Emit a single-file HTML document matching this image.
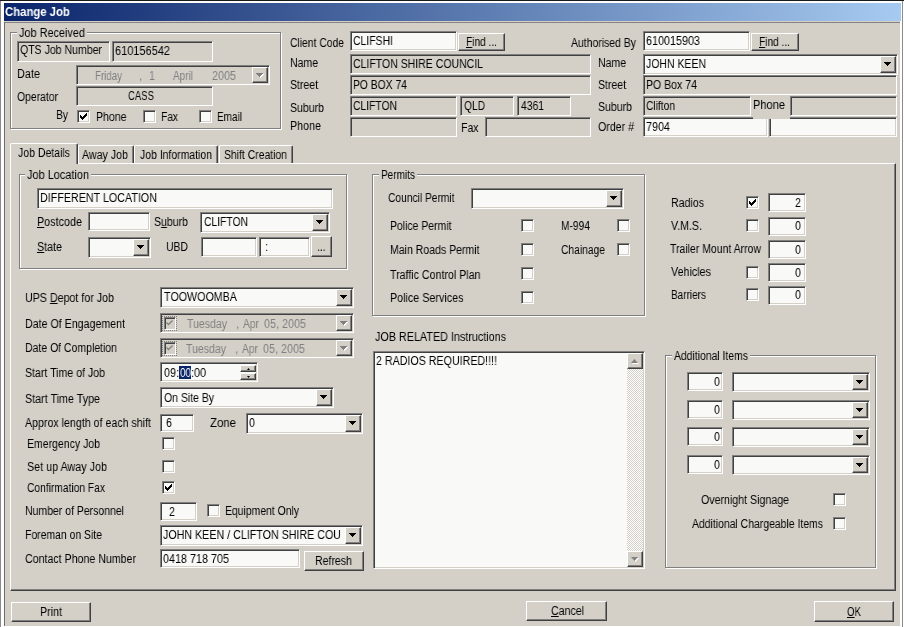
<!DOCTYPE html><html><head><meta charset="utf-8"><title>Change Job</title><style>

html,body{margin:0;padding:0}
body{width:904px;height:627px;overflow:hidden;background:#fdfdfd;position:relative;font-family:"Liberation Sans",sans-serif;font-size:12.5px;color:#000}
div{position:absolute;box-sizing:border-box}
.bg{background:#d4d0c8}
.sk{border:1px solid;border-color:#808080 #fff #fff #808080;box-shadow:inset 1px 1px 0 #404040,inset -1px -1px 0 #d4d0c8;background:#d4d0c8}
.w{background:#f9f9f7}
.bt{border:1px solid;border-color:#fff #404040 #404040 #fff;box-shadow:inset -1px -1px 0 #808080,inset 1px 1px 0 #d4d0c8;background:#d4d0c8}
.gp{border:1px solid #808080;box-shadow:1px 1px 0 #fff,inset 1px 1px 0 #fff}
.tp{border:1px solid;border-color:#fff #404040 #404040 #fff;box-shadow:inset -1px -1px 0 #808080;background:#d4d0c8}
.tab{border:1px solid;border-color:#fff #404040 #d4d0c8 #fff;border-bottom:none;box-shadow:inset -1px 0 0 #808080;background:#d4d0c8;border-radius:2px 2px 0 0}
.tab.act{z-index:2}
.sb{background:#e9e7e3 repeating-conic-gradient(#fff 0 25%,#d4d0c8 0 50%) 0 0/2px 2px}
.dcb{border:1px dotted #808080}
.t{white-space:pre;line-height:14px;height:14px;z-index:3;transform-origin:0 0;will-change:transform}
.t u{text-decoration:underline;text-underline-offset:1px}
#title{left:5px;top:3.75px;font-weight:bold;color:#fff;font-size:12px;line-height:16px;white-space:pre;transform:scaleX(0.945);transform-origin:0 0;will-change:transform}

</style></head><body>
<div class="r" style="left:0px;top:0px;width:904px;height:1px;background:#1a1a1a"></div>
<div class="r" style="left:0px;top:1px;width:1px;height:626px;background:#8a8a8a"></div>
<div class="r" style="left:902px;top:1px;width:1px;height:626px;background:#8c8c8c"></div>
<div class="r" style="left:4px;top:21px;width:896px;height:605px;background:#d4d0c8"></div>
<div class="r" style="left:4px;top:22px;width:896px;height:1px;background:#848484"></div>
<div class="r" style="left:4px;top:22px;width:1px;height:604px;background:#6c6c6c"></div>
<div class="r" style="left:4px;top:3px;width:897px;height:18px;background:linear-gradient(90deg,#0a246a 0%,#a6caf0 100%)"></div>
<div class="gp" style="left:10px;top:32px;width:271px;height:97px;"></div>
<div class="bg" style="left:17px;top:26px;width:70px;height:14px;"></div>
<div class="sk" style="left:17px;top:41px;width:93px;height:21px;"></div>
<div class="sk" style="left:112px;top:41px;width:101px;height:21px;"></div>
<div class="sk" style="left:76px;top:65px;width:194px;height:20px;"></div>
<div class="bt" style="left:252px;top:67px;width:16px;height:16px;"><svg width="7" height="4" viewBox="0 0 7 4" shape-rendering="crispEdges" style="position:absolute;left:4px;top:6px"><path d="M0 0h7v1h-1v1h-1v1h-1v1h-1v-1h-1v-1h-1v-1h-1z" fill="#fff"/></svg><svg width="7" height="4" viewBox="0 0 7 4" shape-rendering="crispEdges" style="position:absolute;left:3px;top:5px"><path d="M0 0h7v1h-1v1h-1v1h-1v1h-1v-1h-1v-1h-1v-1h-1z" fill="#808080"/></svg></div>
<div class="sk" style="left:76px;top:86px;width:137px;height:20px;"></div>
<div class="sk w cb" style="left:77px;top:110px;width:13px;height:13px;"><svg width="7" height="7" viewBox="0 0 7 7" shape-rendering="crispEdges" fill="#000" style="position:absolute;left:2px;top:2px"><rect x="0" y="2" width="1" height="3"/><rect x="1" y="3" width="1" height="3"/><rect x="2" y="4" width="1" height="3"/><rect x="3" y="3" width="1" height="3"/><rect x="4" y="2" width="1" height="3"/><rect x="5" y="1" width="1" height="3"/><rect x="6" y="0" width="1" height="3"/></svg></div>
<div class="sk w cb" style="left:143px;top:110px;width:13px;height:13px;"></div>
<div class="sk w cb" style="left:199px;top:110px;width:13px;height:13px;"></div>
<div class="sk w" style="left:350px;top:31px;width:107px;height:20px;"></div>
<div class="bt" style="left:458px;top:33px;width:47px;height:18px;"></div>
<div class="sk" style="left:350px;top:54px;width:241px;height:20px;"></div>
<div class="sk" style="left:350px;top:75px;width:241px;height:20px;"></div>
<div class="sk" style="left:350px;top:96px;width:107px;height:20px;"></div>
<div class="sk" style="left:460px;top:96px;width:54px;height:20px;"></div>
<div class="sk" style="left:517px;top:96px;width:54px;height:20px;"></div>
<div class="sk" style="left:350px;top:117px;width:107px;height:20px;"></div>
<div class="sk" style="left:485px;top:117px;width:106px;height:20px;"></div>
<div class="sk w" style="left:643px;top:31px;width:107px;height:20px;"></div>
<div class="bt" style="left:751px;top:33px;width:48px;height:18px;"></div>
<div class="sk w" style="left:643px;top:54px;width:255px;height:21px;"></div>
<div class="bt" style="left:880px;top:56px;width:16px;height:17px;"><svg width="7" height="4" viewBox="0 0 7 4" shape-rendering="crispEdges" style="position:absolute;left:3px;top:5px"><path d="M0 0h7v1h-1v1h-1v1h-1v1h-1v-1h-1v-1h-1v-1h-1z" fill="#000"/></svg></div>
<div class="sk" style="left:643px;top:75px;width:254px;height:20px;"></div>
<div class="sk" style="left:643px;top:96px;width:108px;height:20px;"></div>
<div class="sk w" style="left:643px;top:117px;width:125px;height:20px;"></div>
<div class="sk w" style="left:769px;top:117px;width:128px;height:20px;"></div>
<div class="bg" style="left:753px;top:97px;width:37px;height:22px;"></div>
<div class="sk" style="left:790px;top:96px;width:107px;height:20px;"></div>
<div class="tp" style="left:10px;top:163px;width:886px;height:428px;"></div>
<div class="tab" style="left:78px;top:145px;width:56px;height:18px;"></div>
<div class="tab" style="left:134px;top:145px;width:84px;height:18px;"></div>
<div class="tab" style="left:219px;top:145px;width:74px;height:18px;"></div>
<div class="tab act" style="left:10px;top:143px;width:68px;height:21px;"></div>
<div class="gp" style="left:19px;top:174px;width:328px;height:95px;"></div>
<div class="bg" style="left:25px;top:168px;width:66px;height:14px;"></div>
<div class="sk w" style="left:37px;top:188px;width:296px;height:21px;"></div>
<div class="sk w" style="left:88px;top:212px;width:62px;height:19px;"></div>
<div class="sk w" style="left:200px;top:212px;width:130px;height:21px;"></div>
<div class="bt" style="left:312px;top:214px;width:16px;height:17px;"><svg width="7" height="4" viewBox="0 0 7 4" shape-rendering="crispEdges" style="position:absolute;left:3px;top:5px"><path d="M0 0h7v1h-1v1h-1v1h-1v1h-1v-1h-1v-1h-1v-1h-1z" fill="#000"/></svg></div>
<div class="sk w" style="left:88px;top:237px;width:63px;height:21px;"></div>
<div class="bt" style="left:133px;top:239px;width:16px;height:17px;"><svg width="7" height="4" viewBox="0 0 7 4" shape-rendering="crispEdges" style="position:absolute;left:3px;top:5px"><path d="M0 0h7v1h-1v1h-1v1h-1v1h-1v-1h-1v-1h-1v-1h-1z" fill="#000"/></svg></div>
<div class="sk w" style="left:201px;top:237px;width:56px;height:20px;"></div>
<div class="sk w" style="left:259px;top:237px;width:51px;height:20px;"></div>
<div class="bt" style="left:311px;top:236px;width:21px;height:21px;"></div>
<div class="sk w" style="left:160px;top:287px;width:194px;height:21px;"></div>
<div class="bt" style="left:336px;top:289px;width:16px;height:17px;"><svg width="7" height="4" viewBox="0 0 7 4" shape-rendering="crispEdges" style="position:absolute;left:3px;top:5px"><path d="M0 0h7v1h-1v1h-1v1h-1v1h-1v-1h-1v-1h-1v-1h-1z" fill="#000"/></svg></div>
<div class="sk" style="left:160px;top:313px;width:194px;height:20px;"></div>
<div class="bt" style="left:336px;top:315px;width:16px;height:16px;"><svg width="7" height="4" viewBox="0 0 7 4" shape-rendering="crispEdges" style="position:absolute;left:4px;top:6px"><path d="M0 0h7v1h-1v1h-1v1h-1v1h-1v-1h-1v-1h-1v-1h-1z" fill="#fff"/></svg><svg width="7" height="4" viewBox="0 0 7 4" shape-rendering="crispEdges" style="position:absolute;left:3px;top:5px"><path d="M0 0h7v1h-1v1h-1v1h-1v1h-1v-1h-1v-1h-1v-1h-1z" fill="#808080"/></svg></div>
<div class="dcb" style="left:162px;top:316px;width:15px;height:15px;"></div>
<div class="sk" style="left:164px;top:317px;width:12px;height:13px;"><svg width="7" height="6" viewBox="0 0 7 6" style="position:absolute;left:1px;top:2px"><path d="M0.5 2.5L2.5 4.5L6.5 0.5" stroke="#808080" stroke-width="1.3" fill="none"/></svg></div>
<div class="sk" style="left:160px;top:338px;width:194px;height:20px;"></div>
<div class="bt" style="left:336px;top:340px;width:16px;height:16px;"><svg width="7" height="4" viewBox="0 0 7 4" shape-rendering="crispEdges" style="position:absolute;left:4px;top:6px"><path d="M0 0h7v1h-1v1h-1v1h-1v1h-1v-1h-1v-1h-1v-1h-1z" fill="#fff"/></svg><svg width="7" height="4" viewBox="0 0 7 4" shape-rendering="crispEdges" style="position:absolute;left:3px;top:5px"><path d="M0 0h7v1h-1v1h-1v1h-1v1h-1v-1h-1v-1h-1v-1h-1z" fill="#808080"/></svg></div>
<div class="dcb" style="left:162px;top:341px;width:15px;height:15px;"></div>
<div class="sk" style="left:164px;top:342px;width:12px;height:13px;"><svg width="7" height="6" viewBox="0 0 7 6" style="position:absolute;left:1px;top:2px"><path d="M0.5 2.5L2.5 4.5L6.5 0.5" stroke="#808080" stroke-width="1.3" fill="none"/></svg></div>
<div class="sk w" style="left:160px;top:362px;width:98px;height:20px;"></div>
<div class="r" style="left:179px;top:366px;width:12px;height:13px;background:#0a246a"></div>
<div class="bt" style="left:240px;top:365px;width:16px;height:7px;"><svg width="3" height="2" viewBox="0 0 3 2" style="position:absolute;left:6px;top:2px"><path d="M0 2h3L1.5 0z" fill="#000"/></svg></div>
<div class="bt" style="left:240px;top:373px;width:16px;height:7px;"><svg width="3" height="2" viewBox="0 0 3 2" style="position:absolute;left:6px;top:2px"><path d="M0 0h3L1.5 2z" fill="#000"/></svg></div>
<div class="sk w" style="left:160px;top:387px;width:174px;height:21px;"></div>
<div class="bt" style="left:316px;top:389px;width:16px;height:17px;"><svg width="7" height="4" viewBox="0 0 7 4" shape-rendering="crispEdges" style="position:absolute;left:3px;top:5px"><path d="M0 0h7v1h-1v1h-1v1h-1v1h-1v-1h-1v-1h-1v-1h-1z" fill="#000"/></svg></div>
<div class="sk w" style="left:160px;top:414px;width:34px;height:18px;"></div>
<div class="sk w" style="left:246px;top:413px;width:117px;height:21px;"></div>
<div class="bt" style="left:345px;top:415px;width:16px;height:17px;"><svg width="7" height="4" viewBox="0 0 7 4" shape-rendering="crispEdges" style="position:absolute;left:3px;top:5px"><path d="M0 0h7v1h-1v1h-1v1h-1v1h-1v-1h-1v-1h-1v-1h-1z" fill="#000"/></svg></div>
<div class="sk w cb" style="left:162px;top:437px;width:13px;height:13px;"></div>
<div class="sk w cb" style="left:162px;top:460px;width:13px;height:13px;"></div>
<div class="sk w cb" style="left:162px;top:481px;width:13px;height:13px;"><svg width="7" height="7" viewBox="0 0 7 7" shape-rendering="crispEdges" fill="#000" style="position:absolute;left:2px;top:2px"><rect x="0" y="2" width="1" height="3"/><rect x="1" y="3" width="1" height="3"/><rect x="2" y="4" width="1" height="3"/><rect x="3" y="3" width="1" height="3"/><rect x="4" y="2" width="1" height="3"/><rect x="5" y="1" width="1" height="3"/><rect x="6" y="0" width="1" height="3"/></svg></div>
<div class="sk w" style="left:160px;top:502px;width:37px;height:19px;"></div>
<div class="sk w cb" style="left:207px;top:504px;width:13px;height:13px;"></div>
<div class="sk w" style="left:160px;top:525px;width:203px;height:21px;"></div>
<div class="bt" style="left:345px;top:527px;width:16px;height:17px;"><svg width="7" height="4" viewBox="0 0 7 4" shape-rendering="crispEdges" style="position:absolute;left:3px;top:5px"><path d="M0 0h7v1h-1v1h-1v1h-1v1h-1v-1h-1v-1h-1v-1h-1z" fill="#000"/></svg></div>
<div class="sk w" style="left:160px;top:549px;width:140px;height:19px;"></div>
<div class="bt" style="left:304px;top:551px;width:60px;height:20px;"></div>
<div class="gp" style="left:372px;top:174px;width:273px;height:142px;"></div>
<div class="bg" style="left:379px;top:168px;width:38px;height:14px;"></div>
<div class="sk w" style="left:471px;top:188px;width:153px;height:21px;"></div>
<div class="bt" style="left:606px;top:190px;width:16px;height:17px;"><svg width="7" height="4" viewBox="0 0 7 4" shape-rendering="crispEdges" style="position:absolute;left:3px;top:5px"><path d="M0 0h7v1h-1v1h-1v1h-1v1h-1v-1h-1v-1h-1v-1h-1z" fill="#000"/></svg></div>
<div class="sk w cb" style="left:521px;top:219px;width:13px;height:13px;"></div>
<div class="sk w cb" style="left:521px;top:243px;width:13px;height:13px;"></div>
<div class="sk w cb" style="left:521px;top:267px;width:13px;height:13px;"></div>
<div class="sk w cb" style="left:521px;top:291px;width:13px;height:13px;"></div>
<div class="sk w cb" style="left:617px;top:219px;width:13px;height:13px;"></div>
<div class="sk w cb" style="left:617px;top:243px;width:13px;height:13px;"></div>
<div class="sk w" style="left:373px;top:351px;width:272px;height:218px;"></div>
<div class="sb" style="left:627px;top:353px;width:16px;height:214px;"></div>
<div class="bt" style="left:627px;top:353px;width:16px;height:16px;"><svg width="7" height="4" viewBox="0 0 7 4" style="position:absolute;left:4px;top:6px"><path d="M0 4h7L3.5 0z" fill="#fff"/></svg><svg width="7" height="4" viewBox="0 0 7 4" style="position:absolute;left:3px;top:5px"><path d="M0 4h7L3.5 0z" fill="#808080"/></svg></div>
<div class="bt" style="left:627px;top:551px;width:16px;height:16px;"><svg width="7" height="4" viewBox="0 0 7 4" style="position:absolute;left:4px;top:6px"><path d="M0 0h7L3.5 4z" fill="#fff"/></svg><svg width="7" height="4" viewBox="0 0 7 4" style="position:absolute;left:3px;top:5px"><path d="M0 0h7L3.5 4z" fill="#808080"/></svg></div>
<div class="sk w cb" style="left:746px;top:196px;width:13px;height:13px;"><svg width="7" height="7" viewBox="0 0 7 7" shape-rendering="crispEdges" fill="#000" style="position:absolute;left:2px;top:2px"><rect x="0" y="2" width="1" height="3"/><rect x="1" y="3" width="1" height="3"/><rect x="2" y="4" width="1" height="3"/><rect x="3" y="3" width="1" height="3"/><rect x="4" y="2" width="1" height="3"/><rect x="5" y="1" width="1" height="3"/><rect x="6" y="0" width="1" height="3"/></svg></div>
<div class="sk w" style="left:768px;top:193px;width:38px;height:19px;"></div>
<div class="sk w cb" style="left:746px;top:219px;width:13px;height:13px;"></div>
<div class="sk w" style="left:768px;top:217px;width:38px;height:19px;"></div>
<div class="sk w" style="left:768px;top:240px;width:38px;height:19px;"></div>
<div class="sk w cb" style="left:746px;top:266px;width:13px;height:13px;"></div>
<div class="sk w" style="left:768px;top:263px;width:38px;height:19px;"></div>
<div class="sk w cb" style="left:746px;top:288px;width:13px;height:13px;"></div>
<div class="sk w" style="left:768px;top:286px;width:38px;height:19px;"></div>
<div class="gp" style="left:665px;top:355px;width:211px;height:213px;"></div>
<div class="bg" style="left:672px;top:349px;width:78px;height:14px;"></div>
<div class="sk w" style="left:687px;top:372px;width:36px;height:19px;"></div>
<div class="sk w" style="left:732px;top:372px;width:138px;height:20px;"></div>
<div class="bt" style="left:852px;top:374px;width:16px;height:16px;"><svg width="7" height="4" viewBox="0 0 7 4" shape-rendering="crispEdges" style="position:absolute;left:3px;top:5px"><path d="M0 0h7v1h-1v1h-1v1h-1v1h-1v-1h-1v-1h-1v-1h-1z" fill="#000"/></svg></div>
<div class="sk w" style="left:687px;top:400px;width:36px;height:19px;"></div>
<div class="sk w" style="left:732px;top:400px;width:138px;height:20px;"></div>
<div class="bt" style="left:852px;top:402px;width:16px;height:16px;"><svg width="7" height="4" viewBox="0 0 7 4" shape-rendering="crispEdges" style="position:absolute;left:3px;top:5px"><path d="M0 0h7v1h-1v1h-1v1h-1v1h-1v-1h-1v-1h-1v-1h-1z" fill="#000"/></svg></div>
<div class="sk w" style="left:687px;top:427px;width:36px;height:19px;"></div>
<div class="sk w" style="left:732px;top:427px;width:138px;height:20px;"></div>
<div class="bt" style="left:852px;top:429px;width:16px;height:16px;"><svg width="7" height="4" viewBox="0 0 7 4" shape-rendering="crispEdges" style="position:absolute;left:3px;top:5px"><path d="M0 0h7v1h-1v1h-1v1h-1v1h-1v-1h-1v-1h-1v-1h-1z" fill="#000"/></svg></div>
<div class="sk w" style="left:687px;top:455px;width:36px;height:19px;"></div>
<div class="sk w" style="left:732px;top:455px;width:138px;height:20px;"></div>
<div class="bt" style="left:852px;top:457px;width:16px;height:16px;"><svg width="7" height="4" viewBox="0 0 7 4" shape-rendering="crispEdges" style="position:absolute;left:3px;top:5px"><path d="M0 0h7v1h-1v1h-1v1h-1v1h-1v-1h-1v-1h-1v-1h-1z" fill="#000"/></svg></div>
<div class="sk w cb" style="left:833px;top:493px;width:13px;height:13px;"></div>
<div class="sk w cb" style="left:833px;top:517px;width:13px;height:13px;"></div>
<div class="bt" style="left:11px;top:602px;width:80px;height:20px;"></div>
<div class="bt" style="left:526px;top:601px;width:81px;height:20px;"></div>
<div class="bt" style="left:814px;top:601px;width:80px;height:21px;"></div>
<div id="title">Change Job</div>
<div class="t" id="t0" style="left:19px;top:25.5px;transform:scaleX(0.8713);">Job Received</div>
<div class="t" id="t1" style="left:20px;top:42.5px;transform:scaleX(0.8431);">QTS Job Number</div>
<div class="t" id="t2" style="left:115px;top:43.5px;transform:scaleX(0.8789);">610156542</div>
<div class="t" id="t3" style="left:17px;top:66.5px;transform:scaleX(0.8710);">Date</div>
<div class="t" id="t4" style="left:95px;top:68.5px;color:#808080;transform:scaleX(0.7773);">Friday</div>
<div class="t" id="t5" style="left:139px;top:68.5px;color:#808080;transform:scaleX(0.8600);">,</div>
<div class="t" id="t6" style="left:149px;top:68.5px;color:#808080;transform:scaleX(0.8600);">1</div>
<div class="t" id="t7" style="left:173px;top:68.5px;color:#808080;transform:scaleX(0.7995);">April</div>
<div class="t" id="t8" style="left:212px;top:68.5px;color:#808080;transform:scaleX(0.8629);">2005</div>
<div class="t" id="t9" style="left:17px;top:89.5px;transform:scaleX(0.8309);">Operator</div>
<div class="t" id="t10" style="left:128px;top:88.5px;transform:scaleX(0.7637);">CASS</div>
<div class="t" id="t11" style="left:56px;top:107.5px;transform:scaleX(0.8223);">By</div>
<div class="t" id="t12" style="left:95.5px;top:109.5px;transform:scaleX(0.8436);">Phone</div>
<div class="t" id="t13" style="left:161px;top:109.5px;transform:scaleX(0.8156);">Fax</div>
<div class="t" id="t14" style="left:217px;top:109.5px;transform:scaleX(0.7996);">Email</div>
<div class="t" id="t15" style="left:290px;top:35.5px;transform:scaleX(0.8266);">Client Code</div>
<div class="t" id="t16" style="left:290px;top:55.5px;transform:scaleX(0.8397);">Name</div>
<div class="t" id="t17" style="left:290px;top:77.5px;transform:scaleX(0.8393);">Street</div>
<div class="t" id="t18" style="left:290px;top:100.5px;transform:scaleX(0.8434);">Suburb</div>
<div class="t" id="t19" style="left:290px;top:118.5px;transform:scaleX(0.8574);">Phone</div>
<div class="t" id="t20" style="left:353px;top:33.5px;transform:scaleX(0.8344);">CLIFSHI</div>
<div class="t" id="t21" style="left:466px;top:34.5px;transform:scaleX(0.8111);"><u>F</u>ind ...</div>
<div class="t" id="t22" style="left:353px;top:56.5px;transform:scaleX(0.8406);">CLIFTON SHIRE COUNCIL</div>
<div class="t" id="t23" style="left:353px;top:77.5px;transform:scaleX(0.8268);">PO BOX 74</div>
<div class="t" id="t24" style="left:353px;top:98.5px;transform:scaleX(0.8263);">CLIFTON</div>
<div class="t" id="t25" style="left:464px;top:98.5px;transform:scaleX(0.8170);">QLD</div>
<div class="t" id="t26" style="left:521px;top:98.5px;transform:scaleX(0.8270);">4361</div>
<div class="t" id="t27" style="left:460.5px;top:120.5px;transform:scaleX(0.8396);">Fax</div>
<div class="t" id="t28" style="left:571px;top:35.5px;transform:scaleX(0.8352);">Authorised By</div>
<div class="t" id="t29" style="left:646px;top:33.5px;transform:scaleX(0.8629);">610015903</div>
<div class="t" id="t30" style="left:759px;top:34.5px;transform:scaleX(0.8111);"><u>F</u>ind ...</div>
<div class="t" id="t31" style="left:598px;top:55.5px;transform:scaleX(0.8397);">Name</div>
<div class="t" id="t32" style="left:598px;top:77.5px;transform:scaleX(0.8393);">Street</div>
<div class="t" id="t33" style="left:598px;top:99.5px;transform:scaleX(0.8434);">Suburb</div>
<div class="t" id="t34" style="left:598px;top:119.5px;transform:scaleX(0.8492);">Order #</div>
<div class="t" id="t35" style="left:646px;top:57.0px;transform:scaleX(0.8386);">JOHN KEEN</div>
<div class="t" id="t36" style="left:646px;top:77.5px;transform:scaleX(0.8436);">PO Box 74</div>
<div class="t" id="t37" style="left:646px;top:98.5px;transform:scaleX(0.8183);">Clifton</div>
<div class="t" id="t38" style="left:646px;top:119.5px;transform:scaleX(0.8629);">7904</div>
<div class="t" id="t39" style="left:753px;top:97.5px;transform:scaleX(0.8850);">Phone</div>
<div class="t" id="t40" style="left:82px;top:147.5px;transform:scaleX(0.8523);">Away Job</div>
<div class="t" id="t41" style="left:140px;top:147.5px;transform:scaleX(0.8355);">Job Information</div>
<div class="t" id="t42" style="left:224px;top:147.5px;transform:scaleX(0.8319);">Shift Creation</div>
<div class="t" id="t43" style="left:18px;top:145.5px;transform:scaleX(0.8408);">Job Details</div>
<div class="t" id="t44" style="left:27px;top:167.5px;transform:scaleX(0.8746);">Job Location</div>
<div class="t" id="t45" style="left:40px;top:190.5px;transform:scaleX(0.8580);">DIFFERENT LOCATION</div>
<div class="t" id="t46" style="left:37px;top:214.5px;transform:scaleX(0.8633);"><u>P</u>ostcode</div>
<div class="t" id="t47" style="left:154px;top:214.5px;transform:scaleX(0.8431);">S<u>u</u>burb</div>
<div class="t" id="t48" style="left:204px;top:214.5px;transform:scaleX(0.8263);">CLIFTON</div>
<div class="t" id="t49" style="left:37px;top:239.5px;transform:scaleX(0.8561);"><u>S</u>tate</div>
<div class="t" id="t50" style="left:166px;top:239.5px;transform:scaleX(0.8331);">UBD</div>
<div class="t" id="t51" style="left:265px;top:239.5px;transform:scaleX(0.8600);">:</div>
<div class="t" id="t52" style="left:316.5px;top:239.5px;transform:scaleX(0.8156);">...</div>
<div class="t" id="t53" style="left:25px;top:291px;transform:scaleX(0.8538);">UPS <u>D</u>epot for Job</div>
<div class="t" id="t54" style="left:25px;top:317px;transform:scaleX(0.8515);">Date Of Engagement</div>
<div class="t" id="t55" style="left:25px;top:341px;transform:scaleX(0.8380);">Date Of Completion</div>
<div class="t" id="t56" style="left:25px;top:366px;transform:scaleX(0.8467);">Start Time of Job</div>
<div class="t" id="t57" style="left:25px;top:392px;transform:scaleX(0.8590);">Start Time Type</div>
<div class="t" id="t58" style="left:25px;top:416px;transform:scaleX(0.8513);">Approx length of each shift</div>
<div class="t" id="t59" style="left:27px;top:437px;transform:scaleX(0.8404);">Emergency Job</div>
<div class="t" id="t60" style="left:27px;top:460px;transform:scaleX(0.8612);">Set up Away Job</div>
<div class="t" id="t61" style="left:27px;top:481px;transform:scaleX(0.8194);">Confirmation Fax</div>
<div class="t" id="t62" style="left:25px;top:504px;transform:scaleX(0.8381);">Number of Personnel</div>
<div class="t" id="t63" style="left:25px;top:528px;transform:scaleX(0.8331);">Foreman on Site</div>
<div class="t" id="t64" style="left:25px;top:552px;transform:scaleX(0.8497);">Contact Phone Number</div>
<div class="t" id="t65" style="left:164px;top:290px;transform:scaleX(0.8569);">TOOWOOMBA</div>
<div class="t" id="t66" style="left:187px;top:317px;color:#808080;transform:scaleX(0.8424);">Tuesday</div>
<div class="t" id="t67" style="left:236px;top:317px;color:#808080;transform:scaleX(0.8600);">,</div>
<div class="t" id="t68" style="left:243px;top:317px;color:#808080;transform:scaleX(0.8225);">Apr</div>
<div class="t" id="t69" style="left:264px;top:317px;color:#808080;transform:scaleX(0.8625);">05,</div>
<div class="t" id="t70" style="left:282px;top:317px;color:#808080;transform:scaleX(0.8629);">2005</div>
<div class="t" id="t71" style="left:186px;top:342px;color:#808080;transform:scaleX(0.8424);">Tuesday</div>
<div class="t" id="t72" style="left:235px;top:342px;color:#808080;transform:scaleX(0.8600);">,</div>
<div class="t" id="t73" style="left:242px;top:342px;color:#808080;transform:scaleX(0.8225);">Apr</div>
<div class="t" id="t74" style="left:263px;top:342px;color:#808080;transform:scaleX(0.8625);">05,</div>
<div class="t" id="t75" style="left:281px;top:342px;color:#808080;transform:scaleX(0.8629);">2005</div>
<div class="t" id="t76" style="left:164px;top:366px;transform:scaleX(0.8625);">09:</div>
<div class="t" id="t77" style="left:180px;top:366px;color:#fff;transform:scaleX(0.7910);">00</div>
<div class="t" id="t78" style="left:191px;top:366px;transform:scaleX(0.8625);">:00</div>
<div class="t" id="t79" style="left:164px;top:391px;transform:scaleX(0.8368);">On Site By</div>
<div class="t" id="t80" style="left:166px;top:416px;transform:scaleX(0.8600);">6</div>
<div class="t" id="t81" style="left:210px;top:416px;transform:scaleX(0.9123);">Zone</div>
<div class="t" id="t82" style="left:249px;top:416px;transform:scaleX(0.8600);">0</div>
<div class="t" id="t83" style="left:169px;top:505px;transform:scaleX(0.8600);">2</div>
<div class="t" id="t84" style="left:225px;top:504px;transform:scaleX(0.8320);">Equipment Only</div>
<div class="t" id="t85" style="left:163px;top:528px;transform:scaleX(0.8552);">JOHN KEEN / CLIFTON SHIRE COU</div>
<div class="t" id="t86" style="left:163px;top:552px;transform:scaleX(0.8631);">0418 718 705</div>
<div class="t" id="t87" style="left:315px;top:554px;transform:scaleX(0.8451);">Refresh</div>
<div class="t" id="t88" style="left:381px;top:167.5px;transform:scaleX(0.8024);">Permits</div>
<div class="t" id="t89" style="left:387.5px;top:190.5px;transform:scaleX(0.8181);">Council Permit</div>
<div class="t" id="t90" style="left:389.5px;top:218.5px;transform:scaleX(0.8351);">Police Permit</div>
<div class="t" id="t91" style="left:389.5px;top:242.5px;transform:scaleX(0.8420);">Main Roads Permit</div>
<div class="t" id="t92" style="left:389.5px;top:268px;transform:scaleX(0.8514);">Traffic Control Plan</div>
<div class="t" id="t93" style="left:389.5px;top:291px;transform:scaleX(0.8601);">Police Services</div>
<div class="t" id="t94" style="left:561px;top:218.5px;transform:scaleX(0.8183);">M-994</div>
<div class="t" id="t95" style="left:561px;top:242.5px;transform:scaleX(0.8222);">Chainage</div>
<div class="t" id="t96" style="left:375px;top:330px;transform:scaleX(0.8624);">JOB RELATED Instructions</div>
<div class="t" id="t97" style="left:376px;top:354px;transform:scaleX(0.8539);">2 RADIOS REQUIRED!!!!</div>
<div class="t" id="t98" style="left:671px;top:195.5px;transform:scaleX(0.8479);">Radios</div>
<div class="t" id="t99" style="left:795px;top:195.5px;transform:scaleX(0.8600);">2</div>
<div class="t" id="t100" style="left:671px;top:218.5px;transform:scaleX(0.8526);">V.M.S.</div>
<div class="t" id="t101" style="left:795px;top:218.5px;transform:scaleX(0.8600);">0</div>
<div class="t" id="t102" style="left:670px;top:241.5px;transform:scaleX(0.8380);">Trailer Mount Arrow</div>
<div class="t" id="t103" style="left:795px;top:242.5px;transform:scaleX(0.8600);">0</div>
<div class="t" id="t104" style="left:671px;top:265px;transform:scaleX(0.8591);">Vehicles</div>
<div class="t" id="t105" style="left:795px;top:266px;transform:scaleX(0.8600);">0</div>
<div class="t" id="t106" style="left:671px;top:288px;transform:scaleX(0.7997);">Barriers</div>
<div class="t" id="t107" style="left:795px;top:288px;transform:scaleX(0.8600);">0</div>
<div class="t" id="t108" style="left:674px;top:349px;transform:scaleX(0.8320);">Additional Items</div>
<div class="t" id="t109" style="left:714px;top:375px;transform:scaleX(0.8600);">0</div>
<div class="t" id="t110" style="left:714px;top:403px;transform:scaleX(0.8600);">0</div>
<div class="t" id="t111" style="left:714px;top:430px;transform:scaleX(0.8600);">0</div>
<div class="t" id="t112" style="left:714px;top:458px;transform:scaleX(0.8600);">0</div>
<div class="t" id="t113" style="left:701px;top:493px;transform:scaleX(0.8499);">Overnight Signage</div>
<div class="t" id="t114" style="left:692px;top:517px;transform:scaleX(0.8341);">Additional Chargeable Items</div>
<div class="t" id="t115" style="left:40px;top:605px;transform:scaleX(0.8559);">Print</div>
<div class="t" id="t116" style="left:551px;top:604px;transform:scaleX(0.8479);"><u>C</u>ancel</div>
<div class="t" id="t117" style="left:847px;top:605px;transform:scaleX(0.7744);"><u>O</u>K</div>
</body></html>
